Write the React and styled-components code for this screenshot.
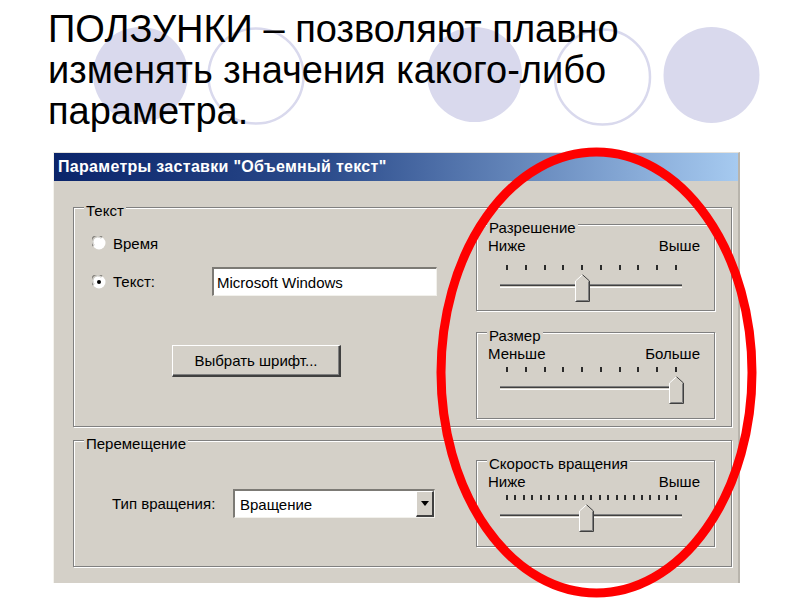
import React from 'react';
import styled, { createGlobalStyle } from 'styled-components';

const GlobalStyle = createGlobalStyle`
  html, body {
    margin: 0;
    padding: 0;
    background: #ffffff;
  }
  body {
    font-family: "Liberation Sans", Arial, sans-serif;
    overflow: hidden;
  }
`;

const Slide = styled.div`
  position: relative;
  width: 800px;
  height: 600px;
  overflow: hidden;
  background: #ffffff;
`;

const Decor = styled.svg`
  position: absolute;
  left: 0;
  top: 0;
  width: 800px;
  height: 150px;
`;

const Heading = styled.h1`
  position: relative;
  margin: 0;
  padding: 9px 0 0 48px;
  height: 132px;
  box-sizing: border-box;
  font-family: "Liberation Sans", Arial, sans-serif;
  font-weight: normal;
  font-size: 38px;
  line-height: 41px;
  color: #000000;
`;

const Highlight = styled.svg`
  position: absolute;
  left: 0;
  top: 0;
  width: 800px;
  height: 600px;
  pointer-events: none;
`;

const Dialog = styled.div`
  margin: 20px 0 0 53px;
  width: 687px;
  height: 431px;
  box-sizing: border-box;
  overflow: hidden;
  background: #d4d0c8;
  border-top: 1px solid #e4e2dc;
  border-left: 1px solid #f4f3ee;
  border-right: 2px solid #b8b4ac;
  font-family: "Liberation Sans", Arial, sans-serif;
  font-size: 15px;
  color: #000000;
`;

const TitleBar = styled.div`
  height: 28px;
  display: flex;
  align-items: center;
  padding-left: 4px;
  background: linear-gradient(90deg, #0a246a 0%, #2c4c8c 40%, #a6caf0 100%);
  color: #ffffff;
  font-weight: bold;
  font-size: 16px;
  letter-spacing: 0.3px;
`;

const Body = styled.div`
  padding: 26px 6px 0 19px;
  display: flex;
  flex-direction: column;
`;

const Group = styled.div`
  position: relative;
  box-sizing: border-box;
  height: ${(p) => p.$height};
  margin-bottom: ${(p) => p.$gap || 0}px;
  padding: ${(p) => p.$pad || '0'};
  border: 1px solid #808080;
  box-shadow: inset 1px 1px 0 #ffffff, 1px 1px 0 #ffffff;
  display: flex;
  align-items: ${(p) => p.$align || 'flex-start'};
  justify-content: space-between;
`;

const Caption = styled.span`
  position: absolute;
  top: -6px;
  left: 10px;
  padding: 0 2px;
  line-height: 17px;
  background: #d4d0c8;
  white-space: nowrap;
`;

const LeftColumn = styled.div`
  flex: 1;
  display: flex;
  flex-direction: column;
  padding-top: 9px;
`;

const RightColumn = styled.div`
  display: flex;
  flex-direction: column;
  gap: 21px;
`;

const OptionRow = styled.div`
  display: flex;
  align-items: center;
  height: ${(p) => p.$height}px;
  margin-bottom: ${(p) => p.$gap || 0}px;
`;

const RadioLabel = styled.span`
  margin-left: 7px;
  width: ${(p) => (p.$width ? `${p.$width}px` : 'auto')};
`;

const Sunken = styled.div`
  box-sizing: border-box;
  height: 29px;
  width: ${(p) => p.$width}px;
  background: #ffffff;
  border-top: 2px solid #7c7a75;
  border-left: 2px solid #7c7a75;
  border-bottom: 1px solid #f2f1ec;
  border-right: 1px solid #f2f1ec;
  display: flex;
  align-items: center;
  padding-left: ${(p) => p.$indent || 3}px;
`;

const ComboText = styled.span`
  flex: 1;
`;

const DropButton = styled.div`
  width: 18px;
  height: 100%;
  box-sizing: border-box;
  background: #d4d0c8;
  border-top: 1px solid #ffffff;
  border-left: 1px solid #ffffff;
  border-right: 2px solid #404040;
  border-bottom: 2px solid #404040;
  display: flex;
  align-items: center;
  justify-content: center;
`;

const PushButton = styled.div`
  box-sizing: border-box;
  width: 169px;
  height: 32px;
  margin-left: 80px;
  display: flex;
  align-items: center;
  justify-content: center;
  background: #d4d0c8;
  border-top: 1px solid #ffffff;
  border-left: 1px solid #ffffff;
  border-right: 2px solid #404040;
  border-bottom: 2px solid #404040;
  box-shadow: inset -1px -1px 0 #808080;
`;

const FieldLabel = styled.span`
  margin-left: 20px;
  width: 121px;
`;

const SliderBox = styled.div`
  position: relative;
  box-sizing: border-box;
  width: 239px;
  height: 87px;
  padding-top: 12px;
  border: 1px solid #808080;
  box-shadow: inset 1px 1px 0 #ffffff, 1px 1px 0 #ffffff;
`;

const EndLabels = styled.div`
  display: flex;
  justify-content: space-between;
  line-height: 18px;
  padding: 0 14px 0 11px;
`;

const SliderBody = styled.div`
  width: 182px;
  margin-left: 23px;
  margin-top: ${(p) => p.$gap}px;
`;

const TickRow = styled.div`
  display: flex;
  justify-content: space-between;
  height: 5px;
  padding: 0 5px 0 6px;
`;

const Tick = styled.span`
  width: 2px;
  height: 5px;
  background: #2b2b2b;
`;

const TrackArea = styled.div`
  position: relative;
  height: 28px;
  margin-top: 4px;
  padding-top: 10px;
  box-sizing: border-box;
`;

const Groove = styled.div`
  height: 4px;
  box-sizing: border-box;
  border-top: 1px solid #808080;
  border-bottom: 1px solid #ffffff;
  background: linear-gradient(#404040 50%, #d4d0c8 50%);
`;

const Thumb = styled.svg`
  position: absolute;
  top: 0;
  width: 15px;
  height: 28px;
`;

const Radio = ({ checked }) => (
  <svg width="14" height="14" viewBox="0 0 14 14">
    <circle cx="7" cy="7" r="6.5" fill="#ffffff" />
    <path d="M1.2 10 A6 6 0 0 1 10 1.2" fill="none" stroke="#8a8883" strokeWidth="1.3" />
    <path d="M2.4 9.2 A4.8 4.8 0 0 1 9.2 2.4" fill="none" stroke="#c8c6c0" strokeWidth="1" />
    {checked && <circle cx="7" cy="7" r="2" fill="#000000" />}
  </svg>
);

const Slider = ({ title, low, high, ticks, value, gap }) => {
  const range = 169;
  const center = 7 + value * range;
  return (
    <SliderBox>
      <Caption>{title}</Caption>
      <EndLabels>
        <span>{low}</span>
        <span>{high}</span>
      </EndLabels>
      <SliderBody $gap={gap}>
        <TickRow>
          {Array.from({ length: ticks }).map((_, i) => (
            <Tick key={i} />
          ))}
        </TickRow>
        <TrackArea>
          <Groove />
          <Thumb viewBox="0 0 15 28" style={{ left: center - 7.5 }}>
            <polygon points="0,7 7.5,0 15,7 15,28 0,28" fill="#d4d0c8" />
            <polyline points="0.5,27.5 0.5,7 7.5,0.7" fill="none" stroke="#ffffff" strokeWidth="1" />
            <polyline points="7.5,0.7 14.5,7 14.5,27.5 0.5,27.5" fill="none" stroke="#404040" strokeWidth="1" />
            <polyline points="13.5,7.5 13.5,26.5 1.5,26.5" fill="none" stroke="#808080" strokeWidth="1" />
          </Thumb>
        </TrackArea>
      </SliderBody>
    </SliderBox>
  );
};

const App = () => {
  return (
    <Slide>
      <GlobalStyle />
      <Decor viewBox="0 0 800 150">
        <circle cx="140.5" cy="74.5" r="47.5" fill="#d9d9ed" />
        <circle cx="256" cy="76" r="47.5" fill="none" stroke="#d9d9ed" strokeWidth="2.5" />
        <circle cx="474.5" cy="74.5" r="47.5" fill="#d9d9ed" />
        <circle cx="602.5" cy="77" r="47.5" fill="none" stroke="#d9d9ed" strokeWidth="2.5" />
        <circle cx="711.5" cy="75" r="48" fill="#d9d9ed" />
      </Decor>

      <Heading>
        ПОЛЗУНКИ – позволяют плавно
        <br />
        изменять значения какого-либо
        <br />
        параметра.
      </Heading>

      <Dialog>
        <TitleBar>Параметры заставки "Объемный текст"</TitleBar>
        <Body>
          <Group $height="220px" $gap={13} $pad="16px 16px 7px 18px">
            <Caption>Текст</Caption>
            <LeftColumn>
              <OptionRow $height={20} $gap={14}>
                <Radio />
                <RadioLabel>Время</RadioLabel>
              </OptionRow>
              <OptionRow $height={29} $gap={49}>
                <Radio checked />
                <RadioLabel $width={99}>Текст:</RadioLabel>
                <Sunken $width={225} $indent={3}>Microsoft Windows</Sunken>
              </OptionRow>
              <PushButton>Выбрать шрифт...</PushButton>
            </LeftColumn>
            <RightColumn>
              <Slider title="Разрешение" low="Ниже" high="Выше" ticks={10} value={4 / 9} gap={10} />
              <Slider title="Размер" low="Меньше" high="Больше" ticks={10} value={1} gap={4} />
            </RightColumn>
          </Group>

          <Group $height="127px" $gap={18} $pad="0 16px 0 18px" $align="center">
            <Caption>Перемещение</Caption>
            <OptionRow $height={29}>
              <FieldLabel>Тип вращения:</FieldLabel>
              <Sunken $width={202} $indent={5}>
                <ComboText>Вращение</ComboText>
                <DropButton>
                  <svg width="8" height="5" viewBox="0 0 8 5">
                    <polygon points="0,0 8,0 4,5" fill="#000000" />
                  </svg>
                </DropButton>
              </Sunken>
            </OptionRow>
            <Slider title="Скорость вращения" low="Ниже" high="Выше" ticks={21} value={0.47} gap={4} />
          </Group>

          <Group $height="120px">
            <Caption>Поверхность</Caption>
          </Group>
        </Body>
      </Dialog>

      <Highlight viewBox="0 0 800 600">
        <ellipse cx="596.5" cy="372.5" rx="155.5" ry="220.5" fill="none" stroke="#ff0000" strokeWidth="9" />
      </Highlight>
    </Slide>
  );
};

export default App;
